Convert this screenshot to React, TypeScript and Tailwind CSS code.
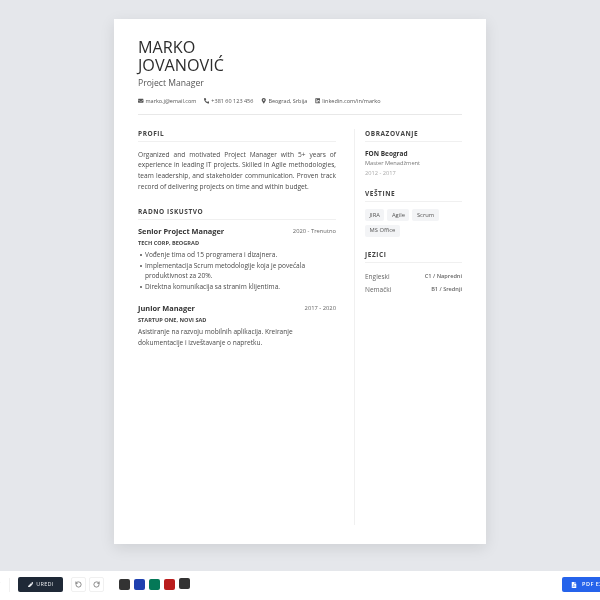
import { RotateCcw, RotateCw } from "lucide-react";
import { FaEnvelope, FaPhoneAlt, FaMapMarkerAlt, FaLinkedin, FaPen, FaFilePdf } from "react-icons/fa";

const contacts = [
  { icon: FaEnvelope, text: "marko.j@email.com" },
  { icon: FaPhoneAlt, text: "+381 60 123 456" },
  { icon: FaMapMarkerAlt, text: "Beograd, Srbija" },
  { icon: FaLinkedin, text: "linkedin.com/in/marko" },
];

const skills = ["JIRA", "Agile", "Scrum", "MS Office"];
const swatches = ["bg-[#333333]", "bg-[#1e40af]", "bg-[#047857]", "bg-[#b91c1c]"];
const bullets = [
  "Vođenje tima od 15 programera i dizajnera.",
  "Implementacija Scrum metodologije koja je povećala produktivnost za 20%.",
  "Direktna komunikacija sa stranim klijentima.",
];

function SectionTitle({ children }: { children: string }) {
  return (
    <h2 className="h-[13px] border-b border-[#f0f0f0] text-[6.5px] leading-[10px] font-bold tracking-[0.56px] text-[#444444]">
      {children}
    </h2>
  );
}

export default function App() {
  return (
    <div className="flex h-[600px] w-[600px] flex-col overflow-hidden bg-[#e5e7eb] font-['Open_Sans',sans-serif] blur-[0.3px]">
      {/* Page */}
      <div className="flex-1 pt-[19px]">
        <div className="mx-auto flex h-[525px] w-[372px] flex-col bg-white px-6 pt-[19px] shadow-[0_4px_14px_rgba(0,0,0,0.1)]">
          {/* Header */}
          <header className="h-[77px] border-b border-[#e8e8e8]">
            <h1 className="text-[16.2px] leading-[18px] text-[#2d2d2d]">
              MARKO
              <br />
              JOVANOVIĆ
            </h1>
            <p className="mt-[2px] text-[8.6px] leading-[14px] text-[#555555]">Project Manager</p>
            <div className="mt-[6px] flex gap-[7.5px] text-[5.5px] leading-[10px] text-[#555555]">
              {contacts.map(({ icon: Icon, text }) => (
                <span key={text} className="flex items-center gap-[2px]">
                  <Icon className="h-[5.5px] w-[5.5px]" />
                  {text}
                </span>
              ))}
            </div>
          </header>

          {/* Body */}
          <div className="flex flex-1 pb-[19px]">
            <main className="w-[198px] pt-[14px]">
              <SectionTitle>PROFIL</SectionTitle>
              <p className="mt-[7.5px] text-justify text-[6.6px] leading-[10.7px] text-[#4a4a4a]">
                Organized and motivated Project Manager with 5+ years of experience in leading IT projects. Skilled in
                Agile methodologies, team leadership, and stakeholder communication. Proven track record of delivering
                projects on time and within budget.
              </p>

              <div className="mt-[14.5px]">
                <SectionTitle>RADNO ISKUSTVO</SectionTitle>
              </div>

              <div className="mt-[5px] flex items-center justify-between">
                <h3 className="text-[7.4px] leading-[12px] font-bold text-[#333333]">Senior Project Manager</h3>
                <span className="text-[5.8px] leading-[12px] text-[#666666]">2020 - Trenutno</span>
              </div>
              <p className="mt-[1px] text-[5.6px] leading-[10px] font-bold text-[#444444]">TECH CORP, BEOGRAD</p>
              <ul className="mt-[2px] text-[6.55px] leading-[10.7px] text-[#4a4a4a]">
                {bullets.map((item) => (
                  <li key={item} className="flex">
                    <span className="mt-[4.5px] mr-[3.5px] ml-[1.5px] h-[2px] w-[2px] shrink-0 rounded-full bg-[#555555]" />
                    {item}
                  </li>
                ))}
              </ul>

              <div className="mt-[9px] flex items-center justify-between">
                <h3 className="text-[7.4px] leading-[12px] font-bold text-[#333333]">Junior Manager</h3>
                <span className="text-[5.8px] leading-[12px] text-[#666666]">2017 - 2020</span>
              </div>
              <p className="mt-[1px] text-[5.6px] leading-[10px] font-bold text-[#444444]">STARTUP ONE, NOVI SAD</p>
              <p className="mt-[2.6px] text-[6.55px] leading-[10.7px] text-[#4a4a4a]">
                Asistiranje na razvoju mobilnih aplikacija. Kreiranje dokumentacije i izveštavanje o napretku.
              </p>
            </main>

            {/* Sidebar */}
            <aside className="mt-[14px] ml-[18px] flex-1 border-l border-[#f0f0f0] pl-[10px]">
              <SectionTitle>OBRAZOVANJE</SectionTitle>
              <h3 className="mt-[7px] text-[6.5px] leading-[10px] font-bold text-[#333333]">FON Beograd</h3>
              <p className="text-[5.7px] leading-[8px] text-[#777777]">Master Menadžment</p>
              <p className="mt-[1.5px] text-[5.7px] leading-[9px] text-[#aaaaaa]">2012 - 2017</p>

              <div className="mt-[11.5px]">
                <SectionTitle>VEŠTINE</SectionTitle>
              </div>
              <div className="mt-[7px] flex flex-wrap gap-x-[3px] gap-y-[3.5px]">
                {skills.map((skill) => (
                  <span key={skill} className="rounded-[2px] bg-[#f3f4f6] px-[4.5px] py-[1.5px] text-[5.8px] leading-[9px] text-[#555555]">
                    {skill}
                  </span>
                ))}
              </div>

              <div className="mt-[13.5px]">
                <SectionTitle>JEZICI</SectionTitle>
              </div>
              <div className="mt-[7px] flex items-center justify-between">
                <span className="text-[6.5px] leading-[13px] text-[#666666]">Engleski</span>
                <span className="text-[5.6px] leading-[13px] font-semibold text-[#666666]">C1 / Napredni</span>
              </div>
              <div className="flex items-center justify-between">
                <span className="text-[6.5px] leading-[13px] text-[#666666]">Nemački</span>
                <span className="text-[5.6px] leading-[13px] font-semibold text-[#666666]">B1 / Srednji</span>
              </div>
            </aside>
          </div>
        </div>
      </div>

      {/* Toolbar */}
      <div className="flex h-[30px] items-center justify-between border-t border-[#e5e7eb] bg-white pb-[2px]">
        <div className="flex items-center">
          <span className="ml-[-4px] text-[7px] leading-[10px] text-[#555555]">V</span>
          <div className="ml-[9px] h-[14px] w-px bg-[#f0f0f0]" />
          <button className="ml-[8px] flex h-[15px] w-[45px] items-center justify-center gap-[3px] rounded-[2px] bg-[#1f2937] text-[5.5px] tracking-[0.3px] text-[#e5e7eb]">
            <FaPen className="h-[5.5px] w-[5.5px]" />
            UREDI
          </button>
          <button className="ml-[8px] flex h-[15px] w-[15px] items-center justify-center rounded-[2px] border border-[#f0f0f0] text-[#444444]">
            <RotateCcw className="h-[7px] w-[7px]" />
          </button>
          <button className="ml-[3px] flex h-[15px] w-[15px] items-center justify-center rounded-[2px] border border-[#f0f0f0] text-[#444444]">
            <RotateCw className="h-[7px] w-[7px]" />
          </button>
          <div className="ml-[15px] flex items-center gap-[4px]">
            {swatches.map((color) => (
              <span key={color} className={`h-[11px] w-[11px] rounded-[2px] ${color}`} />
            ))}
            <span className="mt-[-2px] h-[11px] w-[11px] rounded-[2px] bg-[#333333]" />
          </div>
        </div>
        <button className="mr-[-24px] flex h-[15px] w-[62px] items-center gap-[5px] rounded-[2px] bg-[#2563eb] pl-[9px] text-[5.5px] font-semibold tracking-[0.5px] whitespace-nowrap text-white">
          <FaFilePdf className="h-[6px] w-[6px] shrink-0" />
          PDF EXPORT
        </button>
      </div>
    </div>
  );
}
